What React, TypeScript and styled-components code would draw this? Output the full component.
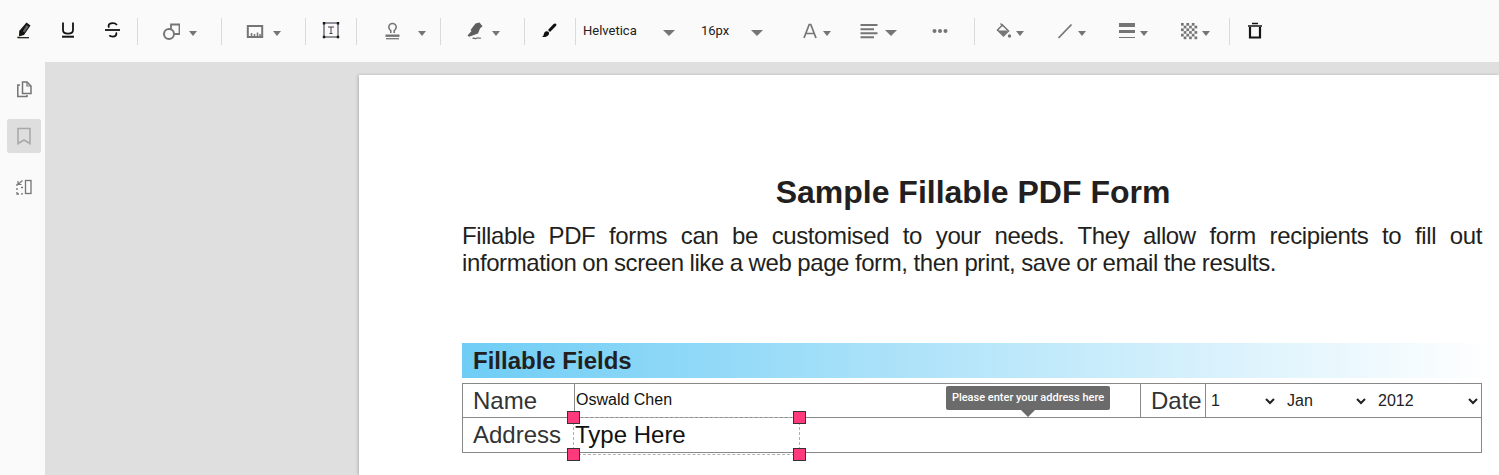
import React from "react"
import styled, { createGlobalStyle } from "styled-components"

const Global = createGlobalStyle`
    html, body { margin: 0; padding: 0; height: 100%; overflow: hidden; }
    body { font-family: "Roboto", sans-serif; background: #fff; }
    #root { height: 100%; }
`
const Wrapper = styled.div`
    height: 100vh;
    display: flex;
    flex-direction: column;
    overflow: hidden;
`
const Toolbar = styled.div`
    height: 62px;
    flex-shrink: 0;
    display: flex;
    align-items: center;
    background: #fafafa;
`
const Tool = styled.div<{ $w: number; $pl: number; $gap?: number }>`
    width: ${p => p.$w}px;
    padding-left: ${p => p.$pl}px;
    box-sizing: border-box;
    flex-shrink: 0;
    display: flex;
    align-items: center;
    gap: ${p => p.$gap ?? 0}px;
`
const Sep = styled.div`
    width: 1px;
    height: 27px;
    flex-shrink: 0;
    background: #dadada;
`
const Caret = styled.span<{ $big?: boolean }>`
    flex-shrink: 0;
    width: 0;
    height: 0;
    margin-top: 4px;
    border-left: ${p => (p.$big ? 6 : 4)}px solid transparent;
    border-right: ${p => (p.$big ? 6 : 4)}px solid transparent;
    border-top: ${p => (p.$big ? 6 : 5)}px solid #757575;
`
const FontLabel = styled.span<{ $w: number }>`
    width: ${p => p.$w}px;
    font-size: 13px;
    line-height: 18px;
    color: #212121;
`
const Body = styled.div`
    flex: 1;
    display: flex;
    min-height: 0;
`
const Sidebar = styled.div`
    width: 45px;
    flex-shrink: 0;
    box-sizing: border-box;
    padding: 10px 4px 0 7px;
    display: flex;
    flex-direction: column;
    gap: 13px;
    background: #fafafa;
`
const SideButton = styled.div<{ $active?: boolean; $mt?: number }>`
    height: 34px;
    margin-top: ${p => p.$mt ?? 0}px;
    display: flex;
    align-items: center;
    justify-content: center;
    border-radius: 2px;
    background: ${p => (p.$active ? "#dedede" : "transparent")};
`
const Canvas = styled.div`
    flex: 1;
    min-width: 0;
    padding: 13px 0 0 314px;
    display: flex;
    background: #dfdfdf;
`
const Page = styled.div`
    flex: 1;
    box-sizing: border-box;
    padding: 99px 17px 0 103px;
    background: #fff;
    box-shadow: -1px 0 3px rgba(0, 0, 0, 0.2);
    font-family: "Liberation Sans", Arial, sans-serif;
    color: #231f20;
`
const Title = styled.h1`
    margin: 0 0 12px;
    padding-left: 2px;
    font-size: 32px;
    line-height: 36px;
    font-weight: 700;
    text-align: center;
`
const Intro = styled.p`
    margin: 0 0 67px;
    font-size: 24px;
    line-height: 27px;
    letter-spacing: -0.4px;
    word-spacing: -0.4px;
    text-align: justify;
`
const SectionHead = styled.div`
    height: 35px;
    margin-bottom: 5px;
    padding-left: 11px;
    font-size: 24px;
    font-weight: 700;
    line-height: 35px;
    background: linear-gradient(to right, #6fcdf5, #ffffff 101%);
`
const FormTable = styled.div`
    position: relative;
    display: grid;
    grid-template-columns: 112px 566px 65px 1fr;
    grid-auto-rows: 34px;
    border: 1px solid #888;
    box-sizing: border-box;
    height: 70px;
`
const Cell = styled.div<{ $span?: number; $right?: boolean; $bottom?: boolean }>`
    grid-column: span ${p => p.$span ?? 1};
    display: flex;
    align-items: center;
    min-width: 0;
    border-right: ${p => (p.$right ? "1px solid #888" : "none")};
    border-bottom: ${p => (p.$bottom ? "1px solid #888" : "none")};
`
const DateCell = styled(Cell)`
    padding-left: 1px;
    gap: 5px;
`
const FieldLabel = styled.span<{ $pl: number }>`
    padding-left: ${p => p.$pl}px;
    font-size: 24px;
    color: #333;
`
const NameValue = styled.span`
    padding: 0 0 2px 1px;
    font-size: 16px;
    color: #111;
`
const DateSelect = styled.select<{ $w: number }>`
    width: ${p => p.$w}px;
    height: 30px;
    border: none;
    outline: none;
    background: #fff;
    color: #222;
    font-family: "Liberation Sans", Arial, sans-serif;
    font-size: 16px;
`
const Hint = styled.div`
    position: absolute;
    left: 483px;
    top: 2px;
    width: 164px;
    height: 24px;
    box-sizing: border-box;
    border-radius: 2px;
    background: #6b6b6b;
    color: #fff;
    font-family: "Roboto", sans-serif;
    font-size: 11px;
    font-weight: 500;
    line-height: 23px;
    text-align: center;
    &::after {
        content: "";
        position: absolute;
        left: 75px;
        top: 24px;
        border-left: 7px solid transparent;
        border-right: 7px solid transparent;
        border-top: 7px solid #6b6b6b;
    }
`
const Annotation = styled.div`
    position: absolute;
    left: 110px;
    top: 33px;
    width: 227px;
    height: 38px;
    box-sizing: border-box;
    border: 1px dashed #b0b0b0;
    padding-left: 1px;
    font-size: 24px;
    line-height: 33px;
    color: #111;
`
const Handle = styled.span<{ $x: "left" | "right"; $y: "top" | "bottom" }>`
    position: absolute;
    ${p => p.$x}: -7px;
    ${p => p.$y}: -7px;
    width: 13px;
    height: 13px;
    box-sizing: border-box;
    background: #ff3a7c;
    border: 1px solid #333;
`

const Icon = ({ children }: { children: React.ReactNode }) => (
    <svg width="18" height="18" viewBox="0 0 18 18" fill="none" style={{ flexShrink: 0 }}>
        {children}
    </svg>
)

const Highlight = () => (
    <Icon>
        <path d="M12.500 0.500L16.500 3.500 10 13 5 14.500 5.200 9z" fill="#141414" />
        <path d="M12.600 3L14.600 4.500 10.500 10.500 8.800 9.200z" fill="#fafafa" opacity="0.35" />
        <path d="M4 14l-1 1.500h2.500z" fill="#a8621e" />
        <path d="M3.500 15.700H15" stroke="#141414" strokeWidth="1.200" />
    </Icon>
)
const Underline = () => (
    <Icon>
        <path d="M4 0.500v7.500c0 2.500 2 3.600 5 3.600s5-1.100 5-3.600V0.500" stroke="#141414" strokeWidth="1.800" />
        <path d="M3 14.700h12" stroke="#141414" strokeWidth="2" />
    </Icon>
)
const Strike = () => (
    <Icon>
        <path d="M14 3C13 1.800 11.600 1.200 9.800 1.200 7.400 1.200 5.600 2.200 5.600 4c0 .6.200 1.100.500 1.600" stroke="#141414" strokeWidth="1.800" />
        <path d="M2 8h15" stroke="#141414" strokeWidth="1.800" />
        <path d="M13 10.500c.3.400.4.800.4 1.300 0 1.800-1.700 2.800-3.700 2.800-1.400 0-2.600-.4-3.400-1.200" stroke="#141414" strokeWidth="1.800" />
    </Icon>
)
const Shapes = () => (
    <Icon>
        <path d="M9 7V2.500h8.500V12H13" stroke="#757575" strokeWidth="1.800" />
        <circle cx="7" cy="12" r="5" stroke="#757575" strokeWidth="2" />
    </Icon>
)
const Picture = () => (
    <Icon>
        <rect x="1.800" y="4" width="14.400" height="11" stroke="#757575" strokeWidth="2" />
        <path d="M5.500 14v-3M8.500 14v-2M11.500 14v-3.500M14 14v-2" stroke="#757575" strokeWidth="1.500" />
    </Icon>
)
const TextBox = () => (
    <Icon>
        <rect x="2" y="1" width="14" height="14" stroke="#2a2a3a" strokeWidth="1" />
        <path d="M0.800 0h2.400v2.400H0.800zM14.800 0h2.400v2.400h-2.400zM0.800 13.800h2.400v2.400H0.800zM14.800 13.800h2.400v2.400h-2.400z" fill="#141414" />
        <path d="M6 5h6M9 5v6.500M7.500 11.500h3" stroke="#4a3a4a" strokeWidth="1" />
    </Icon>
)
const Stamp = () => (
    <Icon>
        <path d="M8.800 11V8.800C7.400 7.400 6.800 6.400 6.800 5.200a3.700 3.700 0 0 1 7.400 0c0 1.200-.6 2.200-2 3.600V11" stroke="#757575" strokeWidth="1.600" />
        <path d="M3.500 13.700h14" stroke="#757575" strokeWidth="2.400" />
        <path d="M4 16.700h13" stroke="#757575" strokeWidth="1.300" />
    </Icon>
)
const Sign = () => (
    <Icon>
        <path d="M10.500 1.500L14.500 0.500 17.500 4.200 15 6.500 13 11.500 4 14.800 2.500 13.500 6.500 9 5.500 8z" fill="#5f5f5f" />
        <path d="M7.500 16.500c1.500-1.200 2.500.6 3.600 0s1.600-1 2.900-.4c.8.400 1.400 0 2-.2" stroke="#666" strokeWidth="1.100" />
    </Icon>
)
const Brush = () => (
    <Icon>
        <path d="M16 2c.7.6.5 1.400-.1 2L10 10 8 8l5.600-5.900c.7-.6 1.800-.7 2.400-.1z" fill="#111" />
        <path d="M6.500 9.300c1.700-.3 3 1 2.500 2.600-.6 2-3.600 3.600-7 3.100 1.600-1 1.600-2.200 2-3.600.3-1 1.200-1.900 2.500-2.100z" fill="#111" />
    </Icon>
)
const FontColor = () => (
    <Icon>
        <path d="M3 16L8.200 2.500h1.600L15 16M5 11.500h8" stroke="#757575" strokeWidth="1.700" />
    </Icon>
)
const AlignLeft = () => (
    <Icon>
        <path d="M0.500 3h17M0.500 7.300h13.500M0.500 11.300h17M0.500 15.300h13.500" stroke="#757575" strokeWidth="1.900" />
    </Icon>
)
const Dots = () => (
    <Icon>
        <circle cx="3.500" cy="9" r="2" fill="#757575" />
        <circle cx="9" cy="9" r="2" fill="#757575" />
        <circle cx="14.500" cy="9" r="2" fill="#757575" />
    </Icon>
)
const Fill = () => (
    <Icon>
        <path d="M8.500 3l6 6-5 5-6-6z" stroke="#757575" strokeWidth="1.500" />
        <path d="M4 8.500h10l-4.500 5z" fill="#757575" />
        <path d="M6.500 1.500l2.500 2.500" stroke="#757575" strokeWidth="1.500" />
        <circle cx="15.500" cy="14" r="1.700" fill="#757575" />
    </Icon>
)
const LineTool = () => (
    <Icon>
        <path d="M2.500 16L15.500 2.500" stroke="#757575" strokeWidth="1.800" />
    </Icon>
)
const Stroke = () => (
    <Icon>
        <path d="M1 1h16v4H1zM1 8h16v3H1z" fill="#757575" />
        <path d="M1 15.500h16" stroke="#757575" strokeWidth="1" />
    </Icon>
)
const Opacity = () => {
    const cells: React.ReactNode[] = []
    for (let r = 0; r < 6; r++) {
        for (let c = 0; c < 6; c++) {
            if ((r + c) % 2 === 0) {
                cells.push(<rect key={`${r}-${c}`} x={1 + c * 2.7} y={1 + r * 2.7} width="2.7" height="2.7" fill="#757575" />)
            }
        }
    }
    return <Icon>{cells}</Icon>
}
const Trash = () => (
    <Icon>
        <path d="M6 1.500h6M2 4h14" stroke="#141414" strokeWidth="1.600" />
        <path d="M4 5v10.500h10V5" stroke="#141414" strokeWidth="2.200" />
    </Icon>
)
const Pages = () => (
    <Icon>
        <path d="M7.500 2h4.500l4 4v7.500H7.500z" stroke="#757575" strokeWidth="1.500" />
        <path d="M12 2v4h4" stroke="#757575" strokeWidth="1.200" />
        <path d="M5 5H2.800v11.500H12V15" stroke="#757575" strokeWidth="1.500" />
    </Icon>
)
const Bookmark = () => (
    <Icon>
        <path d="M3 1.500h12v15L9 13l-6 3.500z" stroke="#a9a9a9" strokeWidth="1.600" />
    </Icon>
)
const SideToggle = () => (
    <Icon>
        <rect x="10.500" y="2.500" width="5.500" height="13" stroke="#757575" strokeWidth="1.300" />
        <path d="M2 6v2M2 10v2M2 14v2h2M6 15.800h2M6 9.500h2" stroke="#757575" strokeWidth="1.300" />
        <path d="M7.500 2.500L3 6.500M3 3v3.500h3.500" stroke="#757575" strokeWidth="1.200" />
    </Icon>
)

const App = () => {
    return (
        <Wrapper>
            <Global />
            <Toolbar>
                <Tool $w={46} $pl={14}><Highlight /></Tool>
                <Tool $w={44} $pl={13}><Underline /></Tool>
                <Tool $w={47} $pl={13}><Strike /></Tool>
                <Sep />
                <Tool $w={83} $pl={24} $gap={9}><Shapes /><Caret /></Tool>
                <Sep />
                <Tool $w={83} $pl={24} $gap={9}><Picture /><Caret /></Tool>
                <Sep />
                <Tool $w={50} $pl={16}><TextBox /></Tool>
                <Sep />
                <Tool $w={83} $pl={25} $gap={18}><Stamp /><Caret /></Tool>
                <Sep />
                <Tool $w={83} $pl={24} $gap={9}><Sign /><Caret /></Tool>
                <Sep />
                <Tool $w={50} $pl={15}><Brush /></Tool>
                <Sep />
                <Tool $w={118} $pl={7}><FontLabel $w={80}>Helvetica</FontLabel><Caret $big /></Tool>
                <Tool $w={82} $pl={7}><FontLabel $w={50}>16px</FontLabel><Caret $big /></Tool>
                <Tool $w={72} $pl={25} $gap={4}><FontColor /><Caret /></Tool>
                <Tool $w={74} $pl={12} $gap={7}><AlignLeft /><Caret $big /></Tool>
                <Tool $w={52} $pl={9}><Dots /></Tool>
                <Sep />
                <Tool $w={70} $pl={19} $gap={4}><Fill /><Caret /></Tool>
                <Tool $w={60} $pl={11} $gap={4}><LineTool /><Caret /></Tool>
                <Tool $w={64} $pl={13} $gap={4}><Stroke /><Caret /></Tool>
                <Tool $w={60} $pl={11} $gap={4}><Opacity /><Caret /></Tool>
                <Sep />
                <Tool $w={40} $pl={16}><Trash /></Tool>
            </Toolbar>
            <Body>
                <Sidebar>
                    <SideButton><Pages /></SideButton>
                    <SideButton $active><Bookmark /></SideButton>
                    <SideButton $mt={4}><SideToggle /></SideButton>
                </Sidebar>
                <Canvas>
                    <Page>
                        <Title>Sample Fillable PDF Form</Title>
                        <Intro>
                            Fillable PDF forms can be customised to your needs. They allow form recipients to fill out
                            information on screen like a web page form, then print, save or email the results.
                        </Intro>
                        <SectionHead>Fillable Fields</SectionHead>
                        <FormTable>
                            <Cell $right $bottom><FieldLabel $pl={10}>Name</FieldLabel></Cell>
                            <Cell $right $bottom><NameValue>Oswald Chen</NameValue></Cell>
                            <Cell $right $bottom><FieldLabel $pl={10}>Date</FieldLabel></Cell>
                            <DateCell $bottom>
                                <DateSelect $w={71} defaultValue="1"><option>1</option></DateSelect>
                                <DateSelect $w={86} defaultValue="Jan"><option>Jan</option></DateSelect>
                                <DateSelect $w={107} defaultValue="2012"><option>2012</option></DateSelect>
                            </DateCell>
                            <Cell><FieldLabel $pl={10}>Address</FieldLabel></Cell>
                            <Cell $span={3} />
                            <Hint>Please enter your address here</Hint>
                            <Annotation>
                                Type Here
                                <Handle $x="left" $y="top" />
                                <Handle $x="right" $y="top" />
                                <Handle $x="left" $y="bottom" />
                                <Handle $x="right" $y="bottom" />
                            </Annotation>
                        </FormTable>
                    </Page>
                </Canvas>
            </Body>
        </Wrapper>
    )
}
export default App
